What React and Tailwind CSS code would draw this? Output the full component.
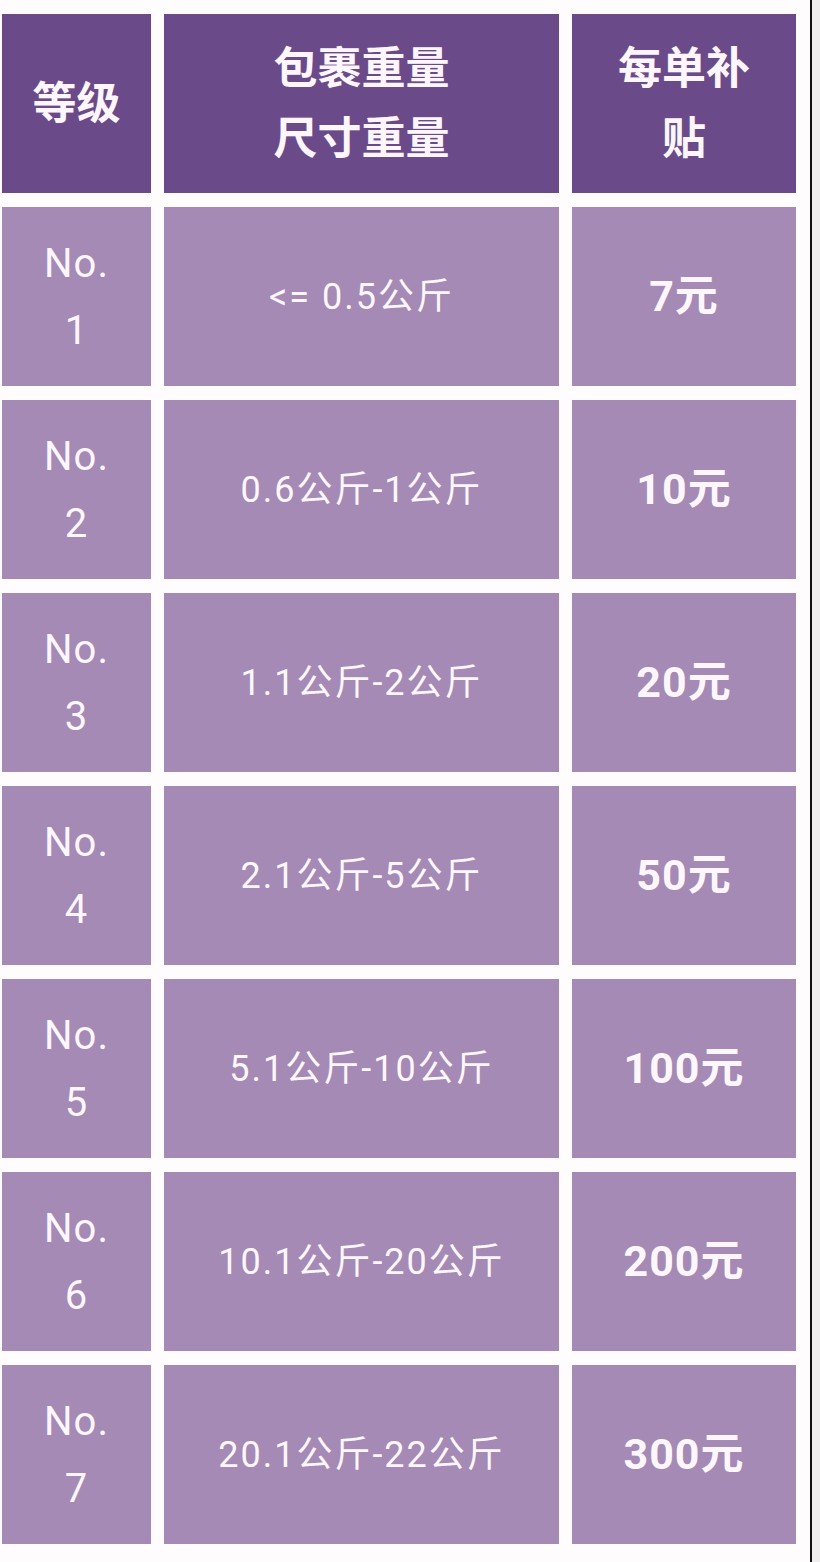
import React from 'react';

const rows = [
    { no: '1', weight: '<= 0.5公斤', pay: '7元' },
    { no: '2', weight: '0.6公斤-1公斤', pay: '10元' },
    { no: '3', weight: '1.1公斤-2公斤', pay: '20元' },
    { no: '4', weight: '2.1公斤-5公斤', pay: '50元' },
    { no: '5', weight: '5.1公斤-10公斤', pay: '100元' },
    { no: '6', weight: '10.1公斤-20公斤', pay: '200元' },
    { no: '7', weight: '20.1公斤-22公斤', pay: '300元' },
];

const font = { fontFamily: 'Roboto, "Noto Sans CJK SC", sans-serif' };

const App = () => {
    return (
        <div className="flex w-[820px] h-[1562px] bg-[#fefcfd] text-[#fdf7fd]" style={font}>
            <div className="flex-1 pl-[2px] pt-[14px] border-r-2 border-[#111111]">
                <div className="grid grid-cols-[149px_395px_224px] gap-x-[13px] gap-y-[14px] auto-rows-[179px]">
                    {/* header */}
                    <div className="bg-[#6b4a8a] flex items-center justify-center text-[44px] font-bold leading-[70px]">等级</div>
                    <div className="bg-[#6b4a8a] flex flex-col items-center justify-center text-[44px] font-bold leading-[70px]">
                        <span>包裹重量</span>
                        <span>尺寸重量</span>
                    </div>
                    <div className="bg-[#6b4a8a] flex flex-col items-center justify-center text-[44px] font-bold leading-[70px]">
                        <span>每单补</span>
                        <span>贴</span>
                    </div>

                    {rows.map((r) => (
                        <React.Fragment key={r.no}>
                            <div className="bg-[#a48ab4] flex flex-col items-center justify-center text-[40px] leading-[67px] tracking-[1px]">
                                <span>No.</span>
                                <span>{r.no}</span>
                            </div>
                            <div className="bg-[#a48ab4] flex items-center justify-center text-[36px] tracking-[2px]">
                                {r.weight}
                            </div>
                            <div className="bg-[#a48ab4] flex items-center justify-center text-[43px] font-bold tracking-[1px]">
                                {r.pay}
                            </div>
                        </React.Fragment>
                    ))}
                </div>
            </div>
            <div className="w-[8px] bg-[#efedee]" />
        </div>
    );
};

export default App;
